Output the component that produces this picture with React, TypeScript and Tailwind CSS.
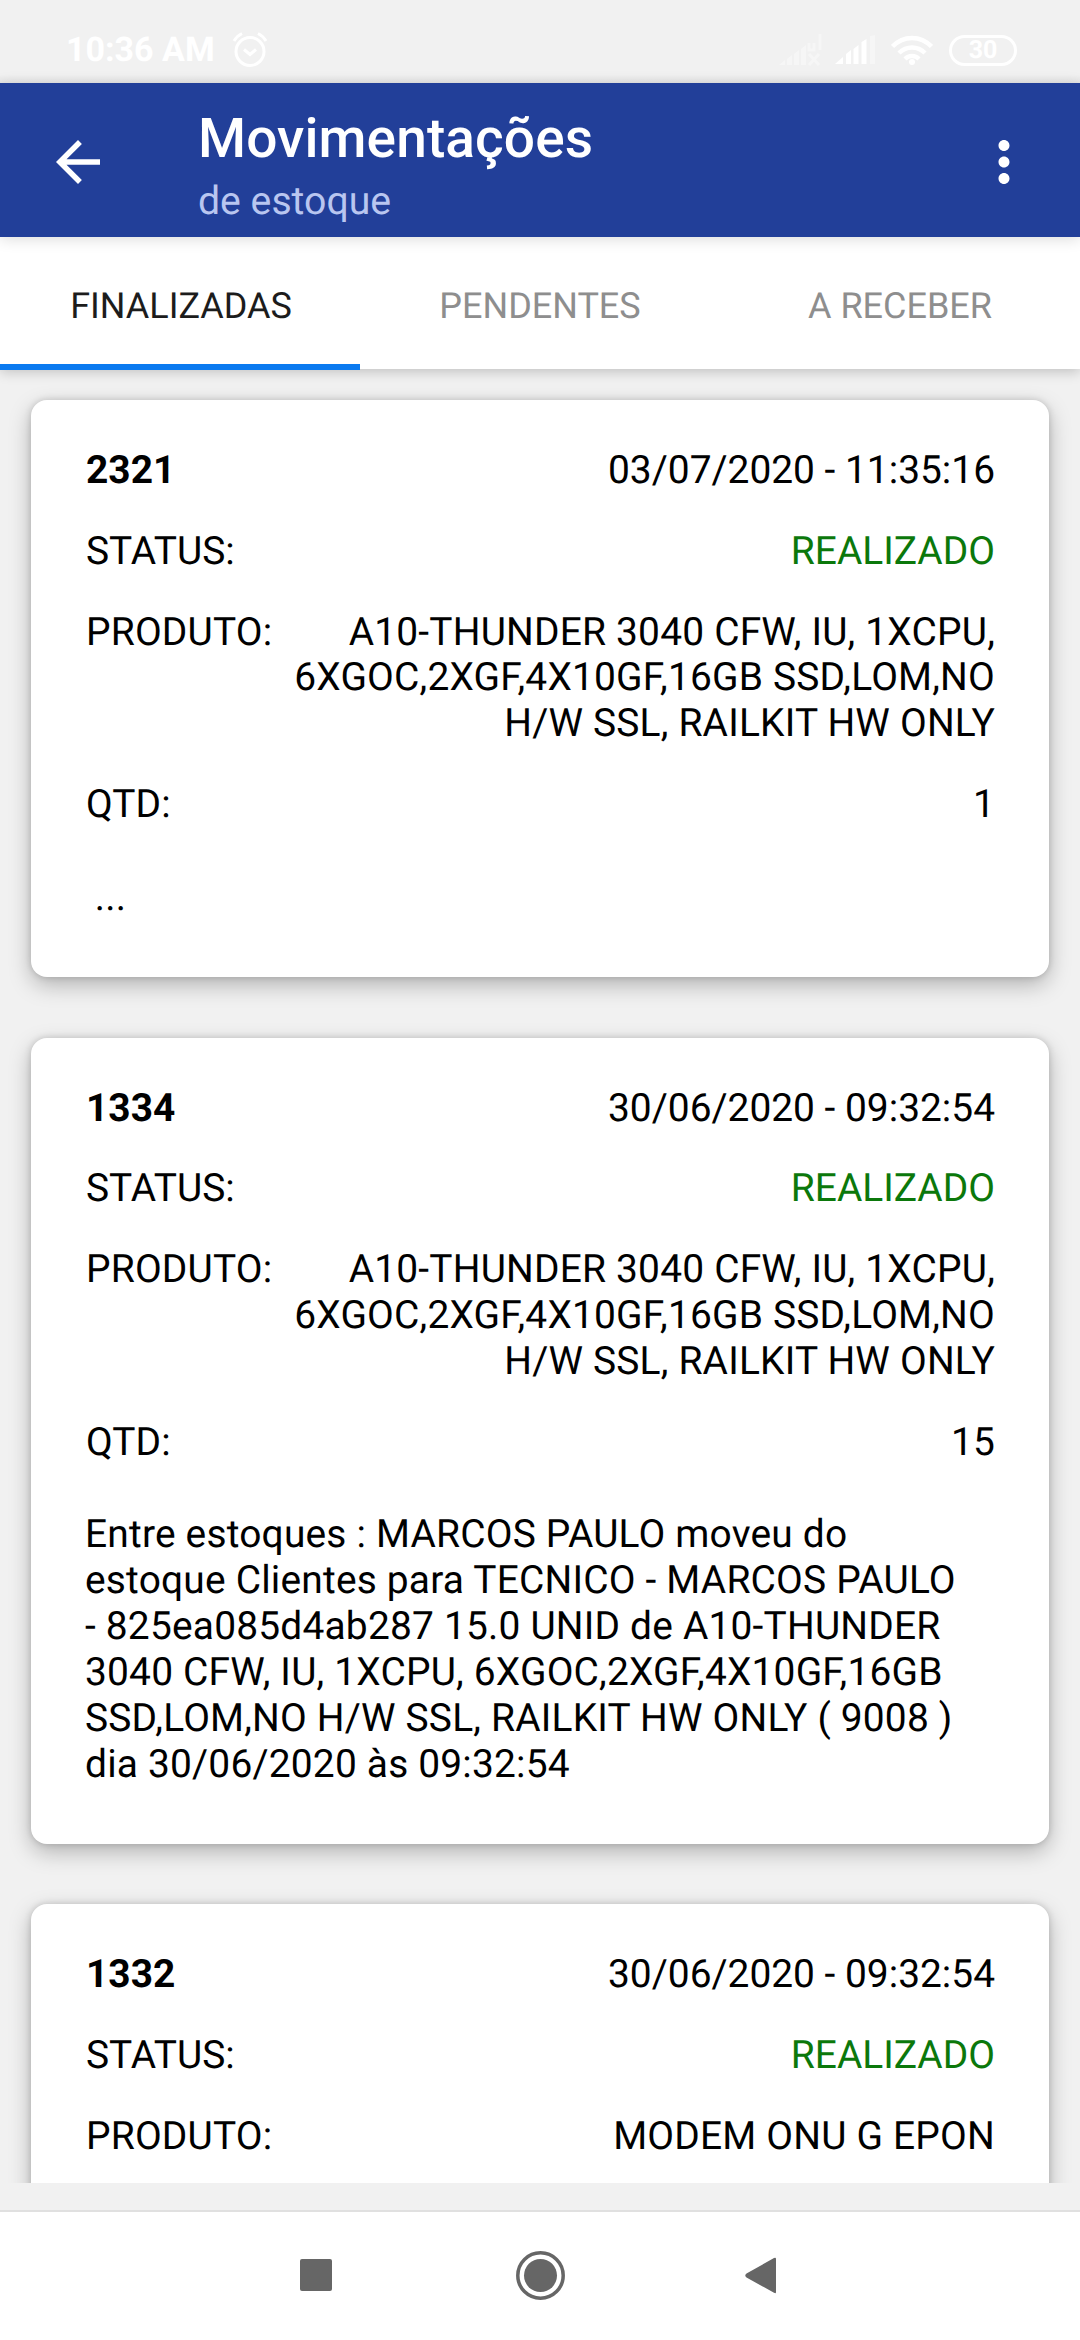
import { MdArrowBack, MdMoreVert } from 'react-icons/md';

const TABS = [
  { label: 'FINALIZADAS', active: true },
  { label: 'PENDENTES', active: false },
  { label: 'A RECEBER', active: false },
];

const PRODUTO_A10 =
  'A10-THUNDER 3040 CFW, IU, 1XCPU, 6XGOC,2XGF,4X10GF,16GB SSD,LOM,NO H/W SSL, RAILKIT HW ONLY';

type Movimentacao = {
  id: string;
  data: string;
  status: string;
  produto: string;
  qtd?: string;
  descricao?: string;
};

const MOVIMENTACOES: Movimentacao[] = [
  {
    id: '2321',
    data: '03/07/2020 - 11:35:16',
    status: 'REALIZADO',
    produto: PRODUTO_A10,
    qtd: '1',
    descricao: ' ...',
  },
  {
    id: '1334',
    data: '30/06/2020 - 09:32:54',
    status: 'REALIZADO',
    produto: PRODUTO_A10,
    qtd: '15',
    descricao:
      'Entre estoques : MARCOS PAULO moveu do estoque Clientes para TECNICO - MARCOS PAULO - 825ea085d4ab287 15.0 UNID de A10-THUNDER 3040 CFW, IU, 1XCPU, 6XGOC,2XGF,4X10GF,16GB SSD,LOM,NO H/W SSL, RAILKIT HW ONLY ( 9008 ) dia 30/06/2020 às 09:32:54',
  },
  {
    id: '1332',
    data: '30/06/2020 - 09:32:54',
    status: 'REALIZADO',
    produto: 'MODEM ONU G EPON',
  },
];

function StatusBar() {
  return (
    <div className="flex h-[83px] shrink-0 items-center justify-between bg-gradient-to-b from-[#f1f1f1] from-90% to-[#e6e6e6] pt-[17px] pr-[63px] pl-[66px] text-white">
      <div className="flex items-center gap-[17px]">
        <span className="text-[34px] leading-none font-bold">10:36 AM</span>
        <svg className="size-[36px]" viewBox="0 0 36 36" fill="none" stroke="currentColor" strokeWidth="3">
          <circle cx="18" cy="19.5" r="14" />
          <path d="M12 17.5l6 5 6-5" />
          <path d="M2 9q3-5 8-7.5M34 9q-3-5-8-7.5" />
        </svg>
      </div>
      <div className="flex items-center">
        <svg className="mr-[12px] h-[32px] w-[44px]" viewBox="0 0 44 32" fill="currentColor" opacity="0.4">
          <path d="M0 31l6-5v5zM8 25l5-4v10H8zM15 20l5-4v15h-5zM22 15l5-4v20h-5z" />
          <path d="M30 9v7h5V9M41 0v16M30 20l10 11M40 20L30 31" fill="none" stroke="currentColor" strokeWidth="3" />
        </svg>
        <svg className="mr-[14px] h-[30px] w-[42px]" viewBox="0 0 42 30" fill="currentColor">
          <path d="M0 29l8-7v7zM11 19l5-4v14h-5zM18.500 14l5-4v19h-5zM26.500 7l5-3v25h-5z" />
          <path d="M35 1l5-1v29h-5z" opacity="0.35" />
        </svg>
        <svg className="mr-[16px] h-[30px] w-[42px]" viewBox="0 0 42 30" fill="none" stroke="currentColor" strokeWidth="4.500">
          <path d="M1.500 11.500c11-11.500 28-11.500 39 0M8 18c7.500-7.500 18.500-7.500 26 0M14 24c4-4 10-4 14 0" />
          <circle cx="21" cy="27" r="3" fill="currentColor" stroke="none" />
        </svg>
        <div className="flex h-[31px] w-[68px] items-center justify-center rounded-full border-[3px] border-white text-[25px] leading-none font-bold">
          30
        </div>
      </div>
    </div>
  );
}

function Header() {
  return (
    <header className="relative z-20 flex h-[154px] shrink-0 items-center bg-[#223f99] pr-[43px] pl-[45px] shadow-[0_2px_14px_rgba(0,0,0,0.14)]">
      <MdArrowBack className="mt-[4px] size-[66px] text-white" />
      <div className="ml-[87px] flex-1 pt-[10px]">
        <h1 className="text-[55px] leading-[64px] font-medium tracking-[0.1px] text-white">Movimentações</h1>
        <p className="mt-[7px] text-[39.2px] leading-[46px] text-[#b9c6f0]">de estoque</p>
      </div>
      <MdMoreVert className="mt-[4px] size-[66px] text-white" />
    </header>
  );
}

function Tabs() {
  return (
    <nav className="relative z-10 grid h-[132px] shrink-0 grid-cols-3 bg-white shadow-[0_3px_12px_rgba(0,0,0,0.2)]">
      {TABS.map((tab) => (
        <div
          key={tab.label}
          className={
            tab.active
              ? 'flex h-[133px] items-center justify-center border-b-[6px] border-[#0b7af0] pt-[10px] pl-[2px] text-[36px] text-[#1c1c1c]'
              : 'flex h-[133px] items-center justify-center border-b-[6px] border-transparent pt-[10px] text-[36px] text-[#8e8e8e]'
          }
        >
          {tab.label}
        </div>
      ))}
    </nav>
  );
}

function Linha({ label, children }: { label: string; children: string }) {
  return (
    <div className="flex justify-between tracking-[0.2px]">
      <span className="shrink-0">{label}</span>
      <span className="w-[716px] text-right">{children}</span>
    </div>
  );
}

function Card({ mov }: { mov: Movimentacao }) {
  return (
    <article className="min-h-[577px] shrink-0 rounded-[16px] bg-white pt-[48px] pr-[54px] pb-[56px] pl-[55px] text-[38.9px] leading-[45.95px] text-black shadow-[0_8px_22px_rgba(0,0,0,0.26),0_0_7px_rgba(0,0,0,0.16)]">
      <div className="flex flex-col gap-[34.8px]">
        <div className="flex justify-between">
          <strong className="font-bold">{mov.id}</strong>
          <span>{mov.data}</span>
        </div>
        <div className="flex justify-between">
          <span>STATUS:</span>
          <span className="text-[#0b780b]">{mov.status}</span>
        </div>
        <Linha label="PRODUTO:">{mov.produto}</Linha>
        {mov.qtd && <Linha label="QTD:">{mov.qtd}</Linha>}
      </div>
      {mov.descricao && (
        <p className="mt-[46.5px] -ml-px w-[875px] tracking-[0.2px] whitespace-pre-wrap">{mov.descricao}</p>
      )}
    </article>
  );
}

function NavBar() {
  return (
    <footer className="flex h-[130px] shrink-0 items-center justify-center border-t-2 border-[#e0e0e0] bg-white text-[#666666]">
      <svg className="h-[50px] w-[480px]" viewBox="0 0 480 50" fill="currentColor">
        <rect x="0" y="8" width="32" height="32" rx="2" />
        <circle cx="240.500" cy="24.500" r="22.700" fill="none" stroke="currentColor" strokeWidth="3.500" />
        <circle cx="240.500" cy="24.500" r="16.500" />
        <path d="M476 8v33q0 2-2 .8L446.500 26.500q-2.500-2 0-4L474 7q2-1 2 1z" />
      </svg>
    </footer>
  );
}

export default function App() {
  return (
    <div className="flex h-[2340px] w-[1080px] flex-col overflow-hidden bg-[#f1f1f1] font-[Roboto,sans-serif] [text-rendering:geometricPrecision]">
      <StatusBar />
      <Header />
      <Tabs />
      <main className="flex h-[1814px] shrink-0 flex-col gap-[60.500px] overflow-hidden px-[31px] pt-[31px]">
        {MOVIMENTACOES.map((mov) => (
          <Card key={mov.id} mov={mov} />
        ))}
      </main>
      <div className="h-[27px] shrink-0" />
      <NavBar />
    </div>
  );
}
